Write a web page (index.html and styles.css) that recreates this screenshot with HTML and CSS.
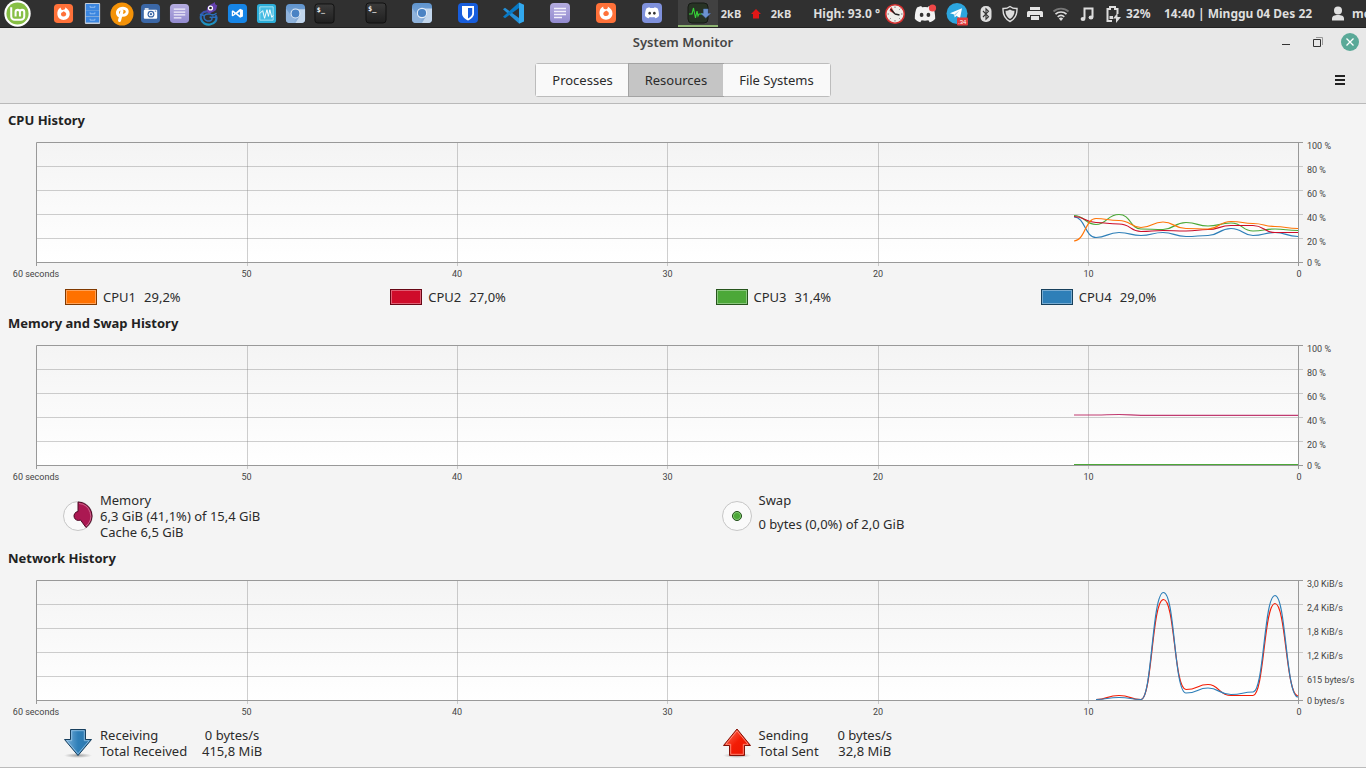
FILE: index.html
```html
<!DOCTYPE html>
<html lang="en">
<head>
<meta charset="utf-8">
<title>System Monitor</title>
<link rel="stylesheet" href="styles.css">
</head>
<body>
<svg class="defs" aria-hidden="true">
  <defs>
    <linearGradient id="plot-bg" x1="0" y1="0" x2="0" y2="1"><stop offset="0" stop-color="#f4f4f4"/><stop offset="1" stop-color="#fff"/></linearGradient>
    <linearGradient id="lilac" x1="0" y1="0" x2="0" y2="1"><stop offset="0" stop-color="#b4acdf"/><stop offset="1" stop-color="#938bd0"/></linearGradient>
    <linearGradient id="chrome" x1="0" y1="0" x2="0" y2="1"><stop offset="0" stop-color="#5e93cd"/><stop offset="1" stop-color="#8db0d8"/></linearGradient>
    <linearGradient id="term" x1="0" y1="0" x2="0" y2="1"><stop offset="0" stop-color="#3b3b3b"/><stop offset="1" stop-color="#202020"/></linearGradient>
    <linearGradient id="recv" x1="0" y1="0" x2="1" y2="0"><stop offset="0" stop-color="#7fb4dc"/><stop offset=".5" stop-color="#2f7fb8"/><stop offset="1" stop-color="#2b75ab"/></linearGradient>
    <linearGradient id="send" x1="0" y1="0" x2="1" y2="1"><stop offset="0" stop-color="#ff7a63"/><stop offset=".5" stop-color="#f31d05"/><stop offset="1" stop-color="#e81200"/></linearGradient>
    <radialGradient id="shade"><stop offset="0" stop-color="#000" stop-opacity=".35"/><stop offset="1" stop-color="#000" stop-opacity="0"/></radialGradient>
    <linearGradient id="lizard" gradientUnits="userSpaceOnUse" x1="0" y1="1" x2="0" y2="23"><stop offset="0" stop-color="#6a3aa8"/><stop offset=".5" stop-color="#2e55b0"/><stop offset="1" stop-color="#1a9cc4"/></linearGradient>
  </defs>
  <symbol id="i-firefox" viewBox="0 0 22 22"><rect x="1" y="1" width="20" height="20" rx="4" fill="#ff7139"/><path d="M8.200 4.600C5 6.200 4.300 9 4.600 12c.4 3.500 3 5.700 6.400 5.700s6.500-2.600 6.500-6.200c0-3.300-1.800-4.900-4.700-7 .4 1.700-.4 2.400-1.700 2.700C9 7.600 8 6.500 8.200 4.600z" fill="#fff"/><path d="M11.200 8.600c-.7 1-1.900 1-2.500 1.800-.9 1.300-.2 3.700 2.300 3.700 2.200 0 3.300-1.800 2.700-3.400-.3-1-1.500-1.400-2.500-2.100z" fill="#ff7139"/></symbol>
  <symbol id="i-cabinet" viewBox="0 0 22 22"><rect x="3" y="0" width="16" height="22" rx="1" fill="#c3ccd8"/><path d="M4 1h14v6.300H4zM4 7.700h14v6.300H4zM4 14.400h14v6.100H4z" fill="#3b86e0"/><path d="M8.500 3v1.500h5V3M8.500 9.800v1.500h5V9.800M8.500 16.500V18h5v-1.500" fill="none" stroke="#a9cdf7" stroke-width=".8"/></symbol>
  <symbol id="i-ppsspp" viewBox="0 0 24 24"><circle cx="12" cy="12" r="11.500" fill="#f39208"/><path d="M9.500 18.500L12 9M8.500 13.500C6 10 8.500 6.200 13 6.200c6 0 5.500 7.300-1 7" fill="none" stroke="#fff" stroke-width="3" stroke-linecap="round"/></symbol>
  <symbol id="i-camera" viewBox="0 0 22 22"><rect x="1" y="1" width="20" height="20" rx="4" fill="#3b67a6"/><rect x="4" y="7" width="14" height="9.500" rx="1" fill="#fff"/><path d="M5 5.500h4V7H5z" fill="#fff"/><circle cx="11.500" cy="11.700" r="3.600" fill="#3b67a6"/><circle cx="11.500" cy="11.700" r="2.300" fill="#fff"/><circle cx="11.500" cy="11.700" r="1.200" fill="#3b67a6"/><path d="M15.500 8h1.500v1h-1.500z" fill="#3b67a6"/></symbol>
  <symbol id="i-notes" viewBox="0 0 22 22"><rect x="1" y="1" width="20" height="20" rx="4" fill="url(#lilac)"/><path d="M5 6.500h12M5 9.500h12M5 12.500h12M5 15.500h8" stroke="#f2f0fb" stroke-width="1.300"/></symbol>
  <symbol id="i-lizard" viewBox="0 0 22 24"><path d="M10 9.500C4 9 2 13 3 17c1 4 5 6 9 5.500 5-.7 7.500-4.500 6-8.500" fill="none" stroke="url(#lizard)" stroke-width="2.200" stroke-linecap="round"/><path d="M9.500 5C11 2.500 15 2 17 0c-.3 2.200.7 3 2.300 3.200C18.500 4.500 19 7 17.500 8.500c-1.500 1.500-4 1.300-5.300 3C9 12 8 7.500 9.500 5z" fill="#6340ad"/><circle cx="12.500" cy="6" r="2.600" fill="#fff"/><circle cx="12.500" cy="6" r="1.300" fill="#222"/><path d="M11.500 12c-5-.5-6 2-5.200 4.500 1 2.500 4.500 3.300 6.700 1.800 1.800-1.300 1-3.300-.8-3M12 12c2 1.500 4 1 6-.5M14.500 15l4 .5M6 13.500l-3.500-1" fill="none" stroke="#2a6fbc" stroke-width="1.500" stroke-linecap="round"/></symbol>
  <symbol id="i-vs" viewBox="0 0 22 22"><rect x="1" y="1" width="20" height="20" rx="4" fill="#1685e6"/><path d="M5 8.500v5l1.200.5 3-2.300 4.500 3.800 3-1.300V7.300L13.700 6 9.200 10l-3-2.300z" fill="#fff"/><path d="M6.300 9.800v2.400L7.800 11zM13.500 8.800v4.400L10.800 11z" fill="#1685e6"/></symbol>
  <symbol id="i-wave" viewBox="0 0 22 22"><rect x="1" y="1" width="20" height="20" rx="3" fill="#2cadd8"/><path d="M4 4h14v14H4z" fill="#45bce3" stroke="#b9ebf8" stroke-width=".9"/><path d="M4 11l1.500-1.500L7 8l2 8L11.500 7l1.500 7 1.500-7 2 8 1.500-2" fill="none" stroke="#fff"/></symbol>
  <symbol id="i-chromium" viewBox="0 0 22 22"><rect x="1" y="1" width="20" height="20" rx="4" fill="url(#chrome)"/><path d="M11 6.500h10V17a4 4 0 0 1-4 4h-6l4.500-7.500z" fill="#c2d6ec"/><path d="M1 6l6 8 4 2.500L9 21H5a4 4 0 0 1-4-4z" fill="#8fb3dc"/><circle cx="11" cy="11" r="5.200" fill="#e5eef8"/><circle cx="11" cy="11" r="4.100" fill="#4a83c4"/></symbol>
  <symbol id="i-bitwarden" viewBox="0 0 22 22"><rect x="1" y="1" width="20" height="20" rx="4" fill="#175ddc"/><path d="M5 4h12v7.500c0 3.500-3 5.500-6 7-3-1.500-6-3.500-6-7z" fill="#fff"/><path d="M11 6h4.200v5.500c0 2.300-2 3.700-4.200 4.900z" fill="#175ddc"/></symbol>
  <symbol id="i-vscode" viewBox="0 0 22 22"><path d="M0 7.300l2-1.600L16 16v5.500z" fill="#2490d8"/><path d="M0 14.700l2 1.600L16 6V.5z" fill="#0879c5"/><path d="M16 .5l5 2.300v16.600l-5 2.300z" fill="#32a8ee"/></symbol>
  <symbol id="i-clyde" viewBox="0 0 24 20"><path d="M8.500 1.500L7.500 0C5.500.4 4 1 2.600 1.700.7 5 0 9.500 0 15c1.700 2 4 3.300 6.500 4.200L8 16.800c2.700.7 5.300.7 8 0l1.500 2.400C20 18.300 22.300 17 24 15c0-5.500-.7-10-2.600-13.300C20 1 18.500.4 16.500 0l-1 1.500a24 24 0 0 0-7 0z" fill="currentColor"/><ellipse cx="8" cy="10.500" rx="2.200" ry="2.500" class="eye"/><ellipse cx="16" cy="10.500" rx="2.200" ry="2.500" class="eye"/></symbol>
  <symbol id="i-monitor" viewBox="0 0 26 22"><rect x="3" y="1" width="20" height="20" rx="4" fill="#273324" stroke="#161a15"/><path d="M4 12h3l1.500-6 2 10L12 9l1 5 1-2h6" fill="none" stroke="#36d438" stroke-width="1.100"/><path d="M18.500 7h4.500v4.500h2.500L20.700 16 16 11.500h2.500z" fill="#6c93d0" stroke="#4c72b0" stroke-width=".5"/></symbol>
</svg>

<nav class="panel" aria-label="Desktop panel">
  <button class="start" aria-label="Menu"><svg viewBox="0 0 28 28"><circle cx="14" cy="14" r="13.700" fill="#fff"/><circle cx="14" cy="14" r="11.500" fill="#87bf45"/><path d="M7.500 7.500v9.500a3.500 3.500 0 0 0 3.500 3.500h6.500a3.500 3.500 0 0 0 3.500-3.500v-4.500a2.250 2.250 0 0 0-4.500 0V17M16.500 12.500a2.250 2.250 0 0 0-4.500 0V17" fill="none" stroke="#fff" stroke-width="2.100"/></svg></button>
  <div class="launchers">
    <button aria-label="Firefox"><svg><use href="#i-firefox"/></svg></button>
    <button aria-label="Files"><svg><use href="#i-cabinet"/></svg></button>
    <button aria-label="PPSSPP"><svg class="wide"><use href="#i-ppsspp"/></svg></button>
    <button aria-label="Screenshot"><svg><use href="#i-camera"/></svg></button>
    <button aria-label="Notes"><svg><use href="#i-notes"/></svg></button>
    <button aria-label="Chameleon"><svg class="wide"><use href="#i-lizard"/></svg></button>
    <button aria-label="Visual Studio"><svg><use href="#i-vs"/></svg></button>
    <button aria-label="Task monitor"><svg><use href="#i-wave"/></svg></button>
    <button aria-label="Chromium"><svg><use href="#i-chromium"/></svg></button>
    <button aria-label="Terminal"><svg viewBox="0 0 22 22"><rect x="1" y="1" width="20" height="20" rx="3" fill="url(#term)" stroke="#111"/><text x="3" y="9" class="prompt">$_</text></svg></button>
  </div>
  <div class="windows">
    <button aria-label="Terminal window"><svg viewBox="0 0 22 22"><rect x="1" y="1" width="20" height="20" rx="3" fill="url(#term)" stroke="#111"/><text x="3" y="9" class="prompt">$_</text></svg></button>
    <button aria-label="Chromium window"><svg><use href="#i-chromium"/></svg></button>
    <button aria-label="Bitwarden window"><svg><use href="#i-bitwarden"/></svg></button>
    <button aria-label="VS Code window"><svg><use href="#i-vscode"/></svg></button>
    <button aria-label="Notes window"><svg><use href="#i-notes"/></svg></button>
    <button aria-label="Firefox window"><svg><use href="#i-firefox"/></svg></button>
    <button aria-label="Discord window"><svg viewBox="0 0 22 22"><rect x="1" y="1" width="20" height="20" rx="4" fill="#7f91dc"/><use class="clyde-blue" href="#i-clyde" x="4" y="5" width="14" height="12" color="#fff"/></svg></button>
    <button class="active" aria-label="System Monitor window"><svg class="wide"><use href="#i-monitor"/></svg></button>
  </div>
  <div class="tray">
    <span class="rate">2kB</span>
    <svg class="up" viewBox="0 0 10 10"><path d="M5 0l5 5H8v4.500H2V5H0z" fill="#e21717"/></svg>
    <span class="rate">2kB</span>
    <span class="temp">High: 93.0 °</span>
    <svg class="t30" viewBox="0 0 30 24"><circle cx="15" cy="12" r="9.300" fill="#efeeea" stroke="#d52f2f" stroke-width="1.600"/><path d="M15 12L9.500 9a8 8 0 0 1 2-4z" fill="#e03a3a"/><path d="M15 12L10.500 7M15 12l4.500 1" stroke="#222" stroke-width="1.300"/><path d="M15 4.500v1.500M15 18v1.500M22.500 12H21M9 12H7.500M20.300 6.700l-1 1M20.300 17.300l-1-1M9.700 17.300l1-1" stroke="#777"/></svg>
    <svg class="t30" viewBox="0 0 30 24"><use href="#i-clyde" x="4" y="4" width="22" height="17" color="#f2f2f2"/><circle cx="22.500" cy="6" r="3.600" fill="#f04747"/></svg>
    <svg class="t34" viewBox="0 0 34 24"><circle cx="17" cy="11.500" r="10.500" fill="#2ca5dd"/><path d="M10 11.300l12-5-2 10-3.500-2.600-1.800 1.700-.5-3z" fill="#fff"/><path d="M14.200 12.400L19.500 8.500l-4.200 4.900z" fill="#9fcde8"/><rect x="17" y="15.500" width="11" height="8" rx="1" fill="#e23b3b"/><text x="18" y="22" class="count">.34</text></svg>
    <svg class="t24" viewBox="0 0 24 24"><rect x="6.500" y="4" width="11" height="16" rx="5" fill="#ddd"/><path d="M9 9l5.500 5.700L12 17.200V6.800l2.500 2.500L9 15" fill="none" stroke="#333" stroke-width="1.100"/></svg>
    <svg class="t24" viewBox="0 0 24 24"><path d="M12 4.500c2 1.500 4.500 2.200 7 2 .3 6-2 10.500-7 13-5-2.500-7.300-7-7-13 2.500.2 5-.5 7-2z" fill="none" stroke="#ddd" stroke-width="1.400"/><path d="M12 7.500c1.300.9 3 1.400 4.500 1.300 0 3.800-1.500 6.400-4.500 8.200-3-1.800-4.500-4.400-4.500-8.200 1.500.1 3.200-.4 4.500-1.300z" fill="#ddd"/></svg>
    <svg class="t26" viewBox="0 0 26 24"><path d="M8 5h10v3H8zM6.500 9h13a1.500 1.500 0 0 1 1.500 1.500V15h-3v-2H8v2H5v-4.500A1.500 1.500 0 0 1 6.500 9zM9 14h8v4H9z" fill="#e4e4e4"/></svg>
    <svg class="t26" viewBox="0 0 26 24"><path d="M5.500 9.500a11 11 0 0 1 15 0" fill="none" stroke="#777" stroke-width="1.800"/><path d="M7.500 12.200a8 8 0 0 1 11 0M9.700 14.800a5 5 0 0 1 6.600 0" fill="none" stroke="#ddd" stroke-width="1.700"/><path d="M13 19l-2.200-2.500a3.500 3.500 0 0 1 4.400 0z" fill="#ddd"/></svg>
    <svg class="t26" viewBox="0 0 26 24"><path d="M10.500 16.500V6.500h8V15" fill="none" stroke="#ddd" stroke-width="2"/><ellipse cx="9" cy="17" rx="2.400" ry="2" fill="#ddd"/><ellipse cx="17" cy="15.500" rx="2.400" ry="2" fill="#ddd"/></svg>
    <svg class="t26" viewBox="0 0 26 24"><path d="M12 19H7.500V7H10V5h5v2h2.500v5" fill="none" stroke="#ddd" stroke-width="2"/><path d="M9.500 14h3.500v3H9.500zM17.500 11l-4.500 5.500h3V21l5-6h-3.500z" fill="#ddd"/></svg>
    <span class="battery">32%</span>
    <time class="clock">14:40 | Minggu 04 Des 22</time>
    <svg class="person" viewBox="0 0 28 24"><circle cx="14" cy="8.500" r="4" fill="#e0e0e0"/><path d="M8 18.500v-2c0-2.500 2.500-3.500 6-3.500s6 1 6 3.500v2z" fill="#e0e0e0"/></svg>
    <span class="user">me</span>
  </div>
</nav>

<header class="header">
  <div class="titlebar">
    <h1>System Monitor</h1>
    <div class="controls">
      <button aria-label="Minimize"><svg viewBox="0 0 18 18"><path d="M5 11.500h8" stroke="#333"/></svg></button>
      <button aria-label="Restore"><svg viewBox="0 0 18 18"><path d="M7 4.500h6.500V12" fill="none" stroke="#999"/><path d="M4.500 6.500h7v7h-7z" fill="none" stroke="#333"/></svg></button>
      <button aria-label="Close"><svg viewBox="0 0 18 18"><circle cx="9" cy="9" r="9" fill="#5aa998"/><path d="M5.500 5.500l7 7M12.500 5.500l-7 7" stroke="#fff" stroke-width="1.300"/></svg></button>
    </div>
  </div>
  <div class="toolbar">
    <div class="switcher">
      <button>Processes</button><button class="selected" aria-pressed="true">Resources</button><button>File Systems</button>
    </div>
    <button class="burger" aria-label="Application menu"><svg viewBox="0 0 12 12"><path d="M1 2h10M1 6h10M1 10h10" stroke="#222" stroke-width="2"/></svg></button>
  </div>
</header>

<main class="resources">
  <section>
    <h2>CPU History</h2>
    <div class="chart">
      <svg class="plot" viewBox="0 0 1263 121" preserveAspectRatio="none">
        <rect x="0" y="0" width="1263" height="121" fill="url(#plot-bg)"/>
        <path class="grid" d="M0 24.500H1267M0 48.500H1267M0 72.500H1267M0 96.500H1267M211.500 0V124M421.500 0V124M631.500 0V124M842.500 0V124M1052.500 0V124"/>
        <path class="frame" d="M0.500 124V.500H1267M0 120.500H1267M1262.500 0V124"/>
        <path class="line blue" d="M1038 75C1049 75 1049 95.500 1060 95.500S1071 90.500 1083 90.500S1094 93.500 1105 93.500S1116 90.500 1127 90.500S1138 94.500 1150 94.500S1161 93.500 1172 93.500S1183 86.500 1195 86.500S1206 93.500 1217 93.500S1228 90.500 1239 90.500S1250 94.500 1262 94.500"/>
        <path class="line green" d="M1038 73.500C1049 73.500 1049 82.500 1060 82.500S1071 72.500 1083 72.500S1094 87 1105 87S1116 87.500 1127 87.500S1138 80.500 1150 80.500S1161 84 1172 84S1183 81 1195 81S1206 89 1217 89S1228 87 1239 87S1250 88.500 1262 88.500"/>
        <path class="line crimson" d="M1038 74.500C1049 74.500 1049 80.500 1060 80.500S1071 82 1083 82S1094 89.500 1105 89.500S1116 88.500 1127 88.500S1138 89 1150 89S1161 87.500 1172 87.500S1183 83.500 1195 83.500S1206 83.500 1217 83.500S1228 90.500 1239 90.500S1250 90.500 1262 90.500"/>
        <path class="line orange" d="M1038 99C1049 99 1049 76.500 1060 76.500S1071 78.500 1083 78.500S1094 85.500 1105 85.500S1116 80 1127 80S1138 86.500 1150 86.500S1161 87 1172 87S1183 79.500 1195 79.500S1206 81.500 1217 81.500S1228 84.500 1239 84.500S1250 86.500 1262 86.500"/>
      </svg>
      <ol class="y-axis"><li>100 %</li><li>80 %</li><li>60 %</li><li>40 %</li><li>20 %</li><li>0 %</li></ol>
      <ol class="x-axis"><li>60 seconds</li><li>50</li><li>40</li><li>30</li><li>20</li><li>10</li><li>0</li></ol>
    </div>
    <div class="legend cpus">
      <div class="cpu"><button class="swatch bg-orange" aria-label="CPU1 color"></button><span>CPU1</span><span class="load">29,2%</span></div>
      <div class="cpu"><button class="swatch bg-crimson" aria-label="CPU2 color"></button><span>CPU2</span><span class="load">27,0%</span></div>
      <div class="cpu"><button class="swatch bg-green" aria-label="CPU3 color"></button><span>CPU3</span><span class="load">31,4%</span></div>
      <div class="cpu"><button class="swatch bg-blue" aria-label="CPU4 color"></button><span>CPU4</span><span class="load">29,0%</span></div>
    </div>
  </section>

  <section>
    <h2>Memory and Swap History</h2>
    <div class="chart">
      <svg class="plot" viewBox="0 0 1263 121" preserveAspectRatio="none">
        <rect x="0" y="0" width="1263" height="121" fill="url(#plot-bg)"/>
        <path class="grid" d="M0 24.500H1267M0 48.500H1267M0 72.500H1267M0 96.500H1267M211.500 0V124M421.500 0V124M631.500 0V124M842.500 0V124M1052.500 0V124"/>
        <path class="frame" d="M0.500 124V.500H1267M0 120.500H1267M1262.500 0V124"/>
        <path class="line magenta" d="M1038 70H1060C1071 70 1071 69.500 1083 69.500S1094 70.300 1105 70.300H1262"/>
        <path class="line green" d="M1038 119.500H1262"/>
      </svg>
      <ol class="y-axis"><li>100 %</li><li>80 %</li><li>60 %</li><li>40 %</li><li>20 %</li><li>0 %</li></ol>
      <ol class="x-axis"><li>60 seconds</li><li>50</li><li>40</li><li>30</li><li>20</li><li>10</li><li>0</li></ol>
    </div>
    <div class="legend pair">
      <div class="stat">
        <svg viewBox="0 0 30 30"><circle cx="15" cy="15" r="14.500" fill="#fafafa" stroke="#c6c6c6"/><path d="M15 1a14 14 0 0 1 8 25.500L17.500 19A4.500 4.500 0 1 1 15 10.500z" fill="#ab1852" stroke="#4c0b25"/><path d="M16 2.500a12.700 12.700 0 0 1 7 22.500" fill="none" stroke="#cf6c92" stroke-width=".9"/></svg>
        <div class="lines"><span>Memory</span><span>6,3 GiB (41,1%) of 15,4 GiB</span><span>Cache 6,5 GiB</span></div>
      </div>
      <div class="stat">
        <svg viewBox="0 0 30 30"><circle cx="15" cy="15" r="14.500" fill="#fafafa" stroke="#c6c6c6"/><circle cx="15" cy="15" r="4.500" fill="#4ca838" stroke="#1f4917"/><circle cx="15" cy="15" r="3.600" fill="none" stroke="#8ccb7d" stroke-width=".8"/></svg>
        <div class="lines spread"><span>Swap</span><span>0 bytes (0,0%) of 2,0 GiB</span></div>
      </div>
    </div>
  </section>

  <section>
    <h2>Network History</h2>
    <div class="chart">
      <svg class="plot" viewBox="0 0 1263 121" preserveAspectRatio="none">
        <rect x="0" y="0" width="1263" height="121" fill="url(#plot-bg)"/>
        <path class="grid" d="M0 24.500H1267M0 48.500H1267M0 72.500H1267M0 96.500H1267M211.500 0V124M421.500 0V124M631.500 0V124M842.500 0V124M1052.500 0V124"/>
        <path class="frame" d="M0.500 124V.500H1267M0 120.500H1267M1262.500 0V124"/>
        <path class="line red" d="M1060 119.500C1071 119.500 1071 115.500 1083 115.500S1094 119.500 1105 119.500S1116 19.500 1127.500 19.500S1138 109.500 1150 109.500S1161 104.500 1172 104.500S1183 115.500 1195 115.500S1206 115.500 1217 115.500S1228 23.500 1239 23.500S1250 116 1262 116"/>
        <path class="line blue" d="M1060 119.500C1071 119.500 1071 117.500 1083 117.500S1094 119.500 1105 119.500S1116 12.500 1127.500 12.500S1138 113 1150 113S1161 108 1172 108S1183 114.500 1195 114.500S1206 112 1217 112S1228 15.500 1239 15.500S1250 117 1262 117"/>
      </svg>
      <ol class="y-axis"><li>3,0 KiB/s</li><li>2,4 KiB/s</li><li>1,8 KiB/s</li><li>1,2 KiB/s</li><li>615 bytes/s</li><li>0 bytes/s</li></ol>
      <ol class="x-axis"><li>60 seconds</li><li>50</li><li>40</li><li>30</li><li>20</li><li>10</li><li>0</li></ol>
    </div>
    <div class="legend pair">
      <div class="stat">
        <svg viewBox="0 0 30 30"><ellipse cx="15" cy="27.500" rx="14" ry="2.500" fill="url(#shade)"/><path d="M7.500 1.500h15v10h6L15 27.500 1.500 11.500h6z" fill="url(#recv)" stroke="#173f5e"/><path d="M8.700 2.700h12.600v10h4.800L15 25.800 3.900 12.700h4.800z" fill="none" stroke="#9cc7e6" stroke-width=".8"/></svg>
        <div class="net"><span>Receiving</span><span>0 bytes/s</span><span>Total Received</span><span>415,8 MiB</span></div>
      </div>
      <div class="stat">
        <svg viewBox="0 0 30 30"><ellipse cx="15" cy="27.500" rx="14" ry="2.500" fill="url(#shade)"/><path d="M15 1L1.500 17.500h6v10h15v-10h6z" fill="url(#send)" stroke="#821006"/><path d="M15 2.800L3.900 16.300h4.800v10h12.600v-10h4.800z" fill="none" stroke="#ff9c8a" stroke-width=".8"/></svg>
        <div class="net sent"><span>Sending</span><span>0 bytes/s</span><span>Total Sent</span><span>32,8 MiB</span></div>
      </div>
    </div>
  </section>
</main>
</body>
</html>
```
FILE: styles.css
```css
* { box-sizing: border-box; }

body {
  margin: 0;
  min-height: 100vh;
  display: flex;
  flex-direction: column;
  overflow-x: hidden;
  background: #f4f4f4;
  border-bottom: 1px solid #bbb;
  color: #2b2b2b;
  font: 13px/16px "Noto Sans", "Open Sans", sans-serif;
}

h1, h2, ol { margin: 0; padding: 0; }
ol { list-style: none; }
svg { display: block; flex: none; }
button {
  margin: 0;
  padding: 0;
  border: 0;
  background: none;
  color: inherit;
  font: inherit;
}

.defs { position: absolute; width: 0; height: 0; }

/* Desktop panel */
.panel {
  display: flex;
  flex: none;
  align-items: center;
  height: 28px;
  overflow: hidden;
  background: #303030;
  border-bottom: 1px solid #222;
  color: #dedede;
  font-size: 12px;
  font-weight: 700;
  white-space: nowrap;
}
.start { flex: none; padding: 0 4px; }
.start svg { width: 27px; height: 27px; }
.launchers { display: flex; margin-left: 14px; }
.launchers button {
  display: grid;
  place-items: center;
  width: 29px;
  height: 27px;
}
.launchers svg { width: 21px; height: 21px; }
.launchers .wide { width: 24px; height: 24px; }
.windows { display: flex; gap: 6px; margin-left: 17px; }
.windows button {
  display: grid;
  place-items: center;
  width: 40px;
  height: 27px;
  border-bottom: 2px solid transparent;
}
.windows svg { width: 22px; height: 22px; }
.windows .wide { width: 26px; }
.windows .active { background: #414141; border-color: #8fb573; }
.prompt { font: bold 7px "DejaVu Sans Mono", monospace; fill: #eee; }
.eye { fill: #333; }

.tray { display: flex; align-items: center; flex: none; }
.rate { width: 26px; text-align: center; font-size: 11px; }
.up { width: 10px; height: 10px; margin: 0 7px; }
.temp { width: 86px; text-align: right; }
.t24 { width: 24px; height: 24px; }
.t26 { width: 26px; height: 24px; }
.t30 { width: 30px; height: 24px; }
.t34 { width: 34px; height: 24px; }
.person { width: 28px; height: 24px; }
.count { font: 6px "Liberation Sans", sans-serif; fill: #fff; }
.battery { width: 38px; }
.clock { width: 160px; }

/* Window header */
.header {
  flex: none;
  background: #e8e8e8;
  border-bottom: 1px solid #b9b9b9;
}
.titlebar, .toolbar {
  display: grid;
  grid-template-columns: 1fr auto 1fr;
  align-items: center;
}
.titlebar { height: 28px; padding-right: 7px; padding-left: 7px; }
.titlebar h1 { grid-column: 2; color: #454545; font-size: 13px; font-weight: 600; }
.controls { display: flex; gap: 14px; justify-self: end; }
.controls svg { width: 18px; height: 18px; }
.toolbar { height: 47px; padding: 7px 20px 6px; }
.switcher {
  grid-column: 2;
  display: flex;
  border: 1px solid #bcbcbc;
  border-radius: 3px;
}
.switcher button {
  height: 32px;
  padding: 0 16px;
  background: #f9f9f9;
}
.switcher .selected {
  background: #c5c5c5;
  box-shadow: 0 0 0 1px #a3a3a3;
}
.burger { justify-self: end; }
.burger svg { width: 12px; height: 12px; }

/* Resource sections */
.resources {
  flex: 1;
  display: flex;
  flex-direction: column;
  gap: 8px;
  padding: 6px 0 0;
}
h2 {
  padding-left: 8px;
  font-size: 13px;
  line-height: 20px;
  font-weight: 700;
  color: #222;
}
.chart {
  display: grid;
  grid-template-columns: 1fr 67px;
  margin-top: 3px;
  padding-left: 36px;
  color: #444;
  font: 9px/12px Roboto, sans-serif;
}
.plot {
  width: 100%;
  height: 121px;
  margin-top: 9px;
  overflow: visible;
}
.plot path { fill: none; vector-effect: non-scaling-stroke; }
.plot .grid { stroke: #888; stroke-opacity: .4; }
.plot .frame { stroke: #999; }
.plot .line { stroke-width: 1.2px; }
.orange { stroke: #ff7508; }
.crimson { stroke: #cc0c29; }
.green { stroke: #4ca838; }
.blue { stroke: #2e7fb8; }
.magenta { stroke: #c03a70; }
.red { stroke: #f31d05; }
.y-axis {
  display: grid;
  grid-template-rows: repeat(5, 24px) 18px;
  align-items: center;
  height: 134px;
  margin-top: 1px;
  padding-left: 8px;
  white-space: nowrap;
}
.x-axis { display: flex; justify-content: space-between; }
.x-axis li {
  display: flex;
  justify-content: center;
  width: 0;
  white-space: nowrap;
}

.legend { display: grid; margin-top: 9px; }
.cpus { grid-template-columns: repeat(4, 1fr); padding-left: 65px; }
.cpu { display: flex; gap: 6px; align-items: center; }
.load { margin-left: 2px; }
.swatch {
  width: 32px;
  height: 16px;
  border: 1px solid #333;
  box-shadow: inset 0 0 0 1px rgba(255, 255, 255, .35);
}
.bg-orange { background: #ff7100; border-color: #803900; }
.bg-crimson { background: #cf0c2a; border-color: #670615; }
.bg-green { background: #4ca838; border-color: #26541c; }
.bg-blue { background: #2e7fb8; border-color: #17405c; }

.pair {
  grid-template-columns: 1fr 1fr;
  column-gap: 14px;
  padding-left: 63px;
}
.stat { display: flex; gap: 7px; align-items: center; }
.stat svg { width: 30px; height: 30px; }
.lines { display: grid; }
.spread { align-self: start; row-gap: 8px; }
.net {
  display: grid;
  grid-template-columns: 87px auto;
  column-gap: 15px;
  white-space: nowrap;
}
.net span:nth-child(even) { text-align: center; }
.sent { grid-template-columns: 62px auto; column-gap: 17px; }
```
